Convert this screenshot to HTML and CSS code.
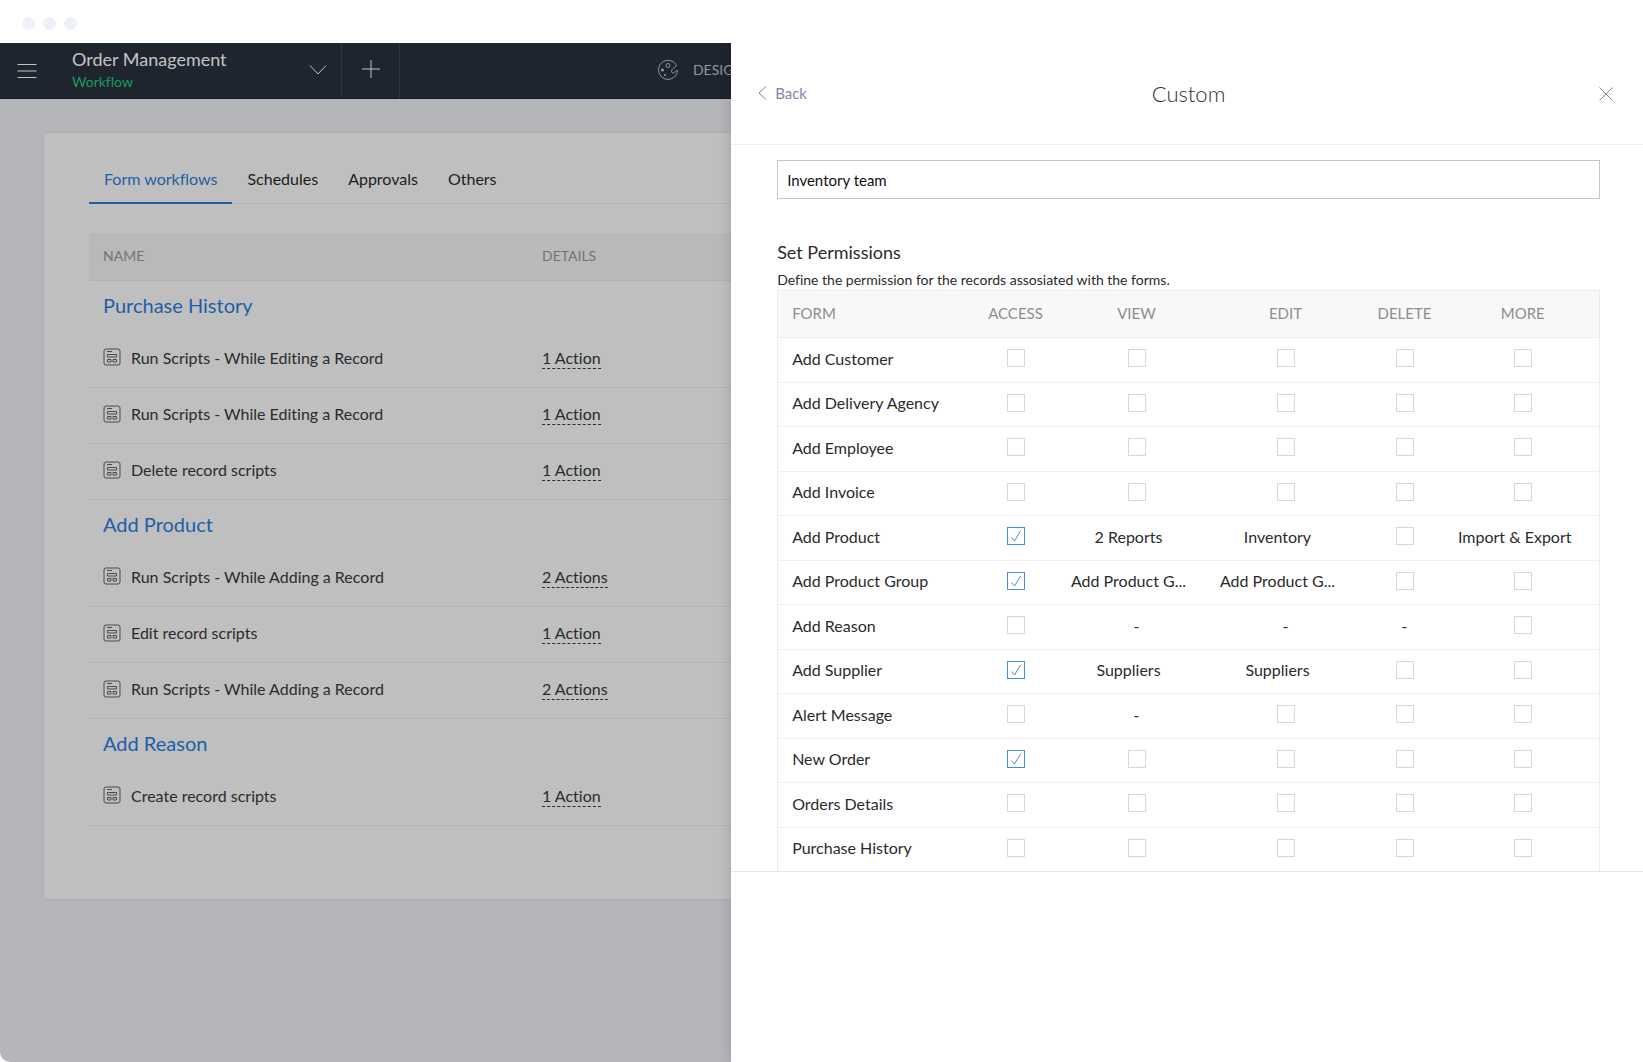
FILE: index.html
```
<!DOCTYPE html>
<html lang="en">
<head>
  <meta charset="UTF-8" />
  <title>Order Management - Workflow</title>
  <link rel="stylesheet" href="styles.css">
</head>
<body>

  <svg class="sprite" aria-hidden="true">
    <symbol id="icon-form" viewBox="0 0 18 18">
      <rect x="1" y="1" width="16" height="16" rx="2" />
      <path d="M4 3.500h5M4.500 6.500h9v2.500h-9zM4.500 11.500h3.500v2.500h-3.500zM10 11.500h3.500v2.500h-3.500z" />
    </symbol>
  </svg>

  <div class="window-bar">
    <span class="dot"></span>
    <span class="dot"></span>
    <span class="dot"></span>
  </div>

  <div class="app">
    <div class="workspace">
      <header class="topbar">
        <button class="menu-btn" type="button" aria-label="Menu">
          <svg width="20" height="16" viewBox="0 0 20 16"><path d="M.5 1.500h19M.5 8h19M.5 14.500h19" /></svg>
        </button>
        <button class="app-switch" type="button">
          <span class="app-name">
            <span class="app-title">Order Management</span>
            <span class="app-section">Workflow</span>
          </span>
          <svg width="18" height="10" viewBox="0 0 18 10"><path d="M1 .5l8 8.500 8-8.500" /></svg>
        </button>
        <button class="add-btn" type="button" aria-label="Add">
          <svg width="20" height="20" viewBox="0 0 20 20"><path d="M10 1v18M1 10h18" /></svg>
        </button>
        <a class="design-link" href="#">
          <svg width="22" height="22" viewBox="0 0 22 22">
            <path d="M18.500 5a9.500 9.500 0 1 0 2 6.500c-1.500 0-2 .5-2.500 1.500s-2 1.500-3 .5-.5-2.500.5-3.500 2.500-1.500 3.500-3c.4-.7.200-1.400-.5-2z" />
            <circle cx="11" cy="6.500" r="2" />
            <circle class="filled" cx="5.500" cy="11" r="1.500" />
            <circle class="filled" cx="8" cy="16" r="1" />
          </svg>
          DESIGN
        </a>
      </header>

      <main class="card">
        <nav class="tabs">
          <a class="tab active" href="#">Form workflows</a>
          <a class="tab" href="#">Schedules</a>
          <a class="tab" href="#">Approvals</a>
          <a class="tab" href="#">Others</a>
        </nav>

        <table class="workflows">
          <thead>
            <tr><th class="name-col">NAME</th><th>DETAILS</th></tr>
          </thead>
          <tbody>
            <tr class="group"><td colspan="2"><a href="#">Purchase History</a></td></tr>
            <tr>
              <td><span class="script"><svg class="icon"><use href="#icon-form" /></svg>Run Scripts - While Editing a Record</span></td>
              <td><a class="action" href="#">1 Action</a></td>
            </tr>
            <tr>
              <td><span class="script"><svg class="icon"><use href="#icon-form" /></svg>Run Scripts - While Editing a Record</span></td>
              <td><a class="action" href="#">1 Action</a></td>
            </tr>
            <tr>
              <td><span class="script"><svg class="icon"><use href="#icon-form" /></svg>Delete record scripts</span></td>
              <td><a class="action" href="#">1 Action</a></td>
            </tr>
            <tr class="group"><td colspan="2"><a href="#">Add Product</a></td></tr>
            <tr>
              <td><span class="script"><svg class="icon"><use href="#icon-form" /></svg>Run Scripts - While Adding a Record</span></td>
              <td><a class="action" href="#">2 Actions</a></td>
            </tr>
            <tr>
              <td><span class="script"><svg class="icon"><use href="#icon-form" /></svg>Edit record scripts</span></td>
              <td><a class="action" href="#">1 Action</a></td>
            </tr>
            <tr>
              <td><span class="script"><svg class="icon"><use href="#icon-form" /></svg>Run Scripts - While Adding a Record</span></td>
              <td><a class="action" href="#">2 Actions</a></td>
            </tr>
            <tr class="group"><td colspan="2"><a href="#">Add Reason</a></td></tr>
            <tr>
              <td><span class="script"><svg class="icon"><use href="#icon-form" /></svg>Create record scripts</span></td>
              <td><a class="action" href="#">1 Action</a></td>
            </tr>
          </tbody>
        </table>
      </main>
    </div>

    <aside class="drawer">
      <header class="drawer-head">
        <button class="back-btn" type="button">
          <svg width="9" height="14" viewBox="0 0 9 14"><path d="M8 .5l-7 6.500 7 6.500" /></svg>
          Back
        </button>
        <h1>Custom</h1>
        <button class="close-btn" type="button" aria-label="Close">
          <svg width="14" height="14" viewBox="0 0 14 14"><path d="M.5 .5l13 13M13.500 .5l-13 13" /></svg>
        </button>
      </header>

      <div class="drawer-body">
        <label class="field-label" for="display-name">Display Name</label>
        <input class="field" id="display-name" type="text" value="Inventory team">

        <h2>Set Permissions</h2>
        <p class="hint">Define the permission for the records assosiated with the forms.</p>

        <table class="permissions">
          <thead>
            <tr>
              <th>FORM</th>
              <th class="access-col">ACCESS</th>
              <th class="view-col">VIEW</th>
              <th class="edit-col">EDIT</th>
              <th class="delete-col">DELETE</th>
              <th class="more-col">MORE</th>
            </tr>
          </thead>
          <tbody id="permission-rows"></tbody>
        </table>
      </div>
    </aside>
  </div>

  <script>
    const columns = ["Access", "View", "Edit", "Delete", "More"];

    // true / false is a checkbox, "-" is not available, other text is a selection
    const permissions = [
      ["Add Customer", false, false, false, false, false],
      ["Add Delivery Agency", false, false, false, false, false],
      ["Add Employee", false, false, false, false, false],
      ["Add Invoice", false, false, false, false, false],
      ["Add Product", true, "2 Reports", "Inventory", false, "Import & Export"],
      ["Add Product Group", true, "Add Product G...", "Add Product G...", false, false],
      ["Add Reason", false, "-", "-", "-", false],
      ["Add Supplier", true, "Suppliers", "Suppliers", false, false],
      ["Alert Message", false, "-", false, false, false],
      ["New Order", true, false, false, false, false],
      ["Orders Details", false, false, false, false, false],
      ["Purchase History", false, false, false, false, false]
    ];

    const body = document.getElementById("permission-rows");

    permissions.forEach(([form, ...values]) => {
      const row = document.createElement("tr");
      const name = document.createElement("td");
      name.innerText = form;
      row.appendChild(name);

      values.forEach((value, i) => {
        const cell = document.createElement("td");
        if (typeof value === "boolean") {
          const box = document.createElement("input");
          box.type = "checkbox";
          box.checked = value;
          box.setAttribute("aria-label", `${form}: ${columns[i]}`);
          cell.appendChild(box);
        } else {
          cell.innerText = value;
          if (value !== "-") {
            cell.classList.add("selection");
          }
        }
        row.appendChild(cell);
      });

      body.appendChild(row);
    });
  </script>
</body>
</html>
```
FILE: styles.css
```
* {
  box-sizing: border-box;
}
body {
  margin: 0;
  min-height: 100vh;
  display: flex;
  flex-direction: column;
  font-family: Lato, "Open Sans", sans-serif;
  font-size: 16px;
  font-variant-ligatures: none;
  color: #2b2b2b;
  background: #fff;
}
button {
  font: inherit;
  color: inherit;
  background: none;
  border: 0;
  padding: 0;
  cursor: pointer;
}
a {
  color: inherit;
  text-decoration: none;
}
svg {
  fill: none;
  stroke: currentColor;
  flex-shrink: 0;
}
table {
  width: 100%;
  border-collapse: collapse;
  table-layout: fixed;
}
th, td {
  padding: 0 0 4px;
  text-align: left;
  font-weight: 400;
}
.sprite {
  display: none;
}

/* window frame */
.window-bar {
  height: 43px;
  padding: 4px 22px 0;
  display: flex;
  align-items: center;
  gap: 8px;
}
.dot {
  width: 13px;
  height: 13px;
  border-radius: 50%;
  background: #eef1f7;
}
.app {
  flex: 1;
  display: grid;
  grid-template-columns: minmax(0, 89fr) minmax(0, 111fr);
}

/* dimmed workspace */
.workspace {
  overflow: hidden;
  background: #b5b6ba;
  border-bottom-left-radius: 10px;
}
.topbar {
  height: 56px;
  display: flex;
  background: #1f252f;
  border-bottom: 1px solid #171a28;
  color: #c3c3c3;
}
.menu-btn {
  width: 72px;
  padding-left: 17px;
  display: flex;
  align-items: center;
}
.app-switch {
  width: 270px;
  padding: 0 14px 2px 0;
  display: flex;
  align-items: center;
  justify-content: space-between;
  border-right: 1px solid #303644;
  text-align: left;
}
.app-name {
  display: flex;
  flex-direction: column;
}
.app-title {
  font-size: 18px;
  line-height: 24px;
}
.app-section {
  font-size: 14px;
  line-height: 22px;
  color: #12a05c;
}
.add-btn {
  width: 58px;
  padding-bottom: 4px;
  display: flex;
  align-items: center;
  justify-content: center;
  border-right: 1px solid #303644;
}
.design-link {
  margin-left: auto;
  margin-right: -13px;
  padding-bottom: 2px;
  display: flex;
  align-items: center;
  gap: 14px;
  font-size: 14px;
  color: #9297a1;
}
.design-link .filled {
  fill: currentColor;
  stroke: none;
}
.card {
  margin: 34px 0 0 44px;
  padding: 21px 0 73px 45px;
  background: #bfbfbf;
  box-shadow: 0 0 6px rgba(0, 0, 0, 0.06);
}
.tabs {
  display: flex;
  border-bottom: 1px solid #b3b3b3;
}
.tab {
  height: 50px;
  margin-bottom: -1px;
  padding: 0 15px;
  line-height: 50px;
  color: #1c1c1c;
}
.tab.active {
  color: #1c5fa8;
  border-bottom: 2px solid #1c5fa8;
}
.workflows {
  margin-top: 30px;
}
.workflows th {
  height: 46px;
  padding-left: 14px;
  font-size: 14px;
  color: #747474;
  background: #b9b9b9;
  border-top: 1px solid #b1b1b1;
  border-bottom: 1px solid #b1b1b1;
}
.workflows .name-col {
  width: 439px;
}
.workflows td {
  height: 56px;
  padding-left: 14px;
  border-bottom: 1px solid #b3b3b3;
}
.workflows .group td {
  height: 51px;
  padding-bottom: 2px;
  border-bottom: 0;
  font-size: 20px;
  color: #1c5fa8;
}
.script {
  display: flex;
  align-items: center;
  gap: 10px;
}
.icon {
  width: 18px;
  height: 18px;
  color: #4b4b4b;
}
.action {
  padding-bottom: 1px;
  border-bottom: 1px dashed #2b2b2b;
}

/* permission drawer */
.drawer {
  background: #fff;
  box-shadow: 0 0 14px rgba(0, 0, 0, 0.16);
  clip-path: inset(0 0 0 -20px);
}
.drawer-head {
  height: 102px;
  padding: 0 30px 0 27px;
  display: grid;
  grid-template-columns: 1fr auto 1fr;
  align-items: center;
  border-bottom: 1px solid #efefef;
  color: #7c88a1;
}
.drawer-head h1 {
  margin: 0;
  padding-left: 6px;
  font-size: 22px;
  font-weight: 300;
  color: #333;
}
.back-btn {
  padding-bottom: 2px;
  display: flex;
  align-items: center;
  gap: 8px;
  font-size: 15px;
}
.close-btn {
  justify-self: end;
  display: flex;
}
.drawer-body {
  height: 727px;
  padding: 0 43px 0 46px;
  overflow: hidden;
  border-bottom: 1px solid #e6e6e6;
}
/* label is scrolled under the header */
.field-label {
  display: block;
  margin-top: -16px;
  margin-bottom: 13px;
  font-size: 14px;
  line-height: 18px;
}
.field {
  width: 100%;
  height: 39px;
  padding: 0 9px;
  font: inherit;
  font-size: 15px;
  color: #111;
  background: #fff;
  border: 1px solid #c4c4cc;
  outline: 0;
}
h2 {
  margin: 41px 0 0;
  font-size: 18px;
  font-weight: 400;
  line-height: 24px;
}
.hint {
  margin: 6px 0 0;
  font-size: 14px;
  line-height: 20px;
}
.permissions {
  border: 1px solid #ececec;
}
.permissions th {
  height: 47px;
  padding-bottom: 2px;
  font-size: 15px;
  color: #8e8e8e;
  background: #f8f8f8;
}
.permissions tr {
  border-bottom: 1px solid #efefef;
}
.permissions td {
  height: 45px;
}
.permissions tr:nth-child(even) td {
  height: 44px;
}
.permissions th:first-child,
.permissions td:first-child {
  padding-left: 14px;
}
.permissions th:not(:first-child),
.permissions td:not(:first-child) {
  text-align: center;
}
.permissions .access-col {
  width: 98px;
}
.permissions .view-col {
  width: 144px;
}
.permissions .edit-col {
  width: 154px;
}
.permissions .delete-col {
  width: 84px;
}
.permissions .more-col {
  width: 153px;
}
.permissions .selection {
  padding-right: 16px;
}
input[type="checkbox"] {
  appearance: none;
  display: block;
  width: 18px;
  height: 18px;
  margin: 0 auto;
  background: #fff;
  border: 1px solid #d8d8d8;
}
input[type="checkbox"]:checked {
  border-color: #3f8ee0;
  background: url("data:image/svg+xml,%3Csvg xmlns='http://www.w3.org/2000/svg' viewBox='0 0 16 16'%3E%3Cpath d='M3.500 9.500l3 3.500 6-10' fill='none' stroke='%233f8ee0'/%3E%3C/svg%3E") center / 16px no-repeat;
}
```
